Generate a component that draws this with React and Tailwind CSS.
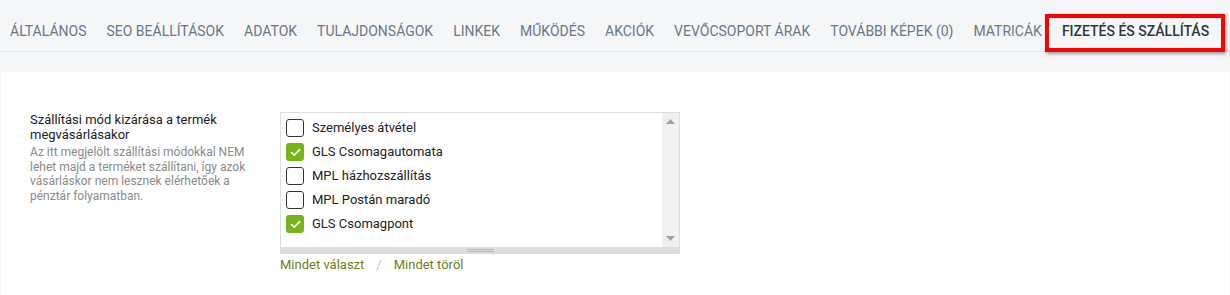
const tabs = [
  "Általános",
  "SEO beállítások",
  "Adatok",
  "Tulajdonságok",
  "Linkek",
  "Működés",
  "Akciók",
  "Vevőcsoport árak",
  "További képek (0)",
  "Matricák",
];

const options = [
  { name: "Személyes átvétel", checked: false },
  { name: "GLS Csomagautomata", checked: true },
  { name: "MPL házhozszállítás", checked: false },
  { name: "MPL Postán maradó", checked: false },
  { name: "GLS Csomagpont", checked: true },
];

const Box = ({ checked }) =>
  checked ? (
    <span className="flex h-[18px] w-[18px] items-center justify-center rounded-[3px] bg-[#78b51c]">
      <svg width="11" height="9" viewBox="0 0 11 9" fill="none">
        <path d="M1.5 4.6 4.2 7.2 9.6 1.6" stroke="#fff" strokeWidth="1.6" strokeLinecap="round" strokeLinejoin="round" />
      </svg>
    </span>
  ) : (
    <span className="block h-[18px] w-[18px] rounded-[3px] border border-[#333] bg-white" />
  );

const App = () => {
  return (
    <div className="h-[295px] w-[1230px] overflow-hidden bg-[#f5f6f8] font-['Roboto',sans-serif]">
      <div className="flex h-[52px] items-center border-b border-[#e2e4e7] pt-[10px]">
        {tabs.map((t) => (
          <div key={t} className="px-[10px] text-[14px] leading-[20px] uppercase text-[#6a7886]">
            {t}
          </div>
        ))}
        <div className="relative px-[10px] text-[14px] leading-[20px] font-medium uppercase text-[#2e3742]">
          Fizetés és szállítás
          {/* red highlight frame */}
          <span className="absolute -top-[7px] -bottom-[11px] -left-[7px] -right-[6px] border-4 border-[#ff0000] shadow-[1px_2px_3px_rgba(0,0,0,0.35)]" />
        </div>
      </div>

      <div className="mx-[1px] mt-[20px] h-[230px] rounded-tl-[3px] bg-white pl-[29px] pt-[40px]">
        <div className="flex gap-[20px]">
          <div className="w-[230px]">
            <div className="text-[13px] leading-[15px] text-[#222]">
              Szállítási mód kizárása a termék megvásárlásakor
            </div>
            <div className="mt-[3px] text-[12px] leading-[14.5px] text-[#8a8a8a]">
              Az itt megjelölt szállítási módokkal NEM lehet majd a terméket szállítani, így azok vásárláskor nem lesznek elérhetőek a pénztár folyamatban.
            </div>
          </div>

          <div>
            <div className="w-[400px] border border-[#dcdcdc]">
              <div className="flex h-[134px]">
                <div className="flex-1 pl-[5px] pt-[3px]">
                  {options.map((o) => (
                    <div key={o.name} className="flex h-[24px] items-center gap-[8px]">
                      <Box checked={o.checked} />
                      <span className="text-[13px] text-[#222]">{o.name}</span>
                    </div>
                  ))}
                </div>
                <div className="flex w-[17px] flex-col items-center justify-between bg-[#f1f1f1] py-[6px]">
                  <svg width="9" height="5" viewBox="0 0 9 5"><path d="M4.5 0 9 5H0z" fill="#a3a3a3" /></svg>
                  <svg width="9" height="5" viewBox="0 0 9 5"><path d="M0 0h9L4.5 5z" fill="#a3a3a3" /></svg>
                </div>
              </div>
              <div className="flex h-[6px] flex-col items-center justify-center gap-[1px] bg-[#dcdfe2]">
                <span className="block h-px w-[27px] bg-[#b4b8bc]" />
                <span className="block h-px w-[27px] bg-[#b4b8bc]" />
              </div>
            </div>
            <div className="mt-[1px] flex items-center text-[13px]">
              <span className="text-[#6e7d14]">Mindet választ</span>
              <span className="px-[12px] text-[#c4c4c4]">/</span>
              <span className="text-[#6e7d14]">Mindet töröl</span>
            </div>
          </div>
        </div>
      </div>
    </div>
  );
};

export default App;
